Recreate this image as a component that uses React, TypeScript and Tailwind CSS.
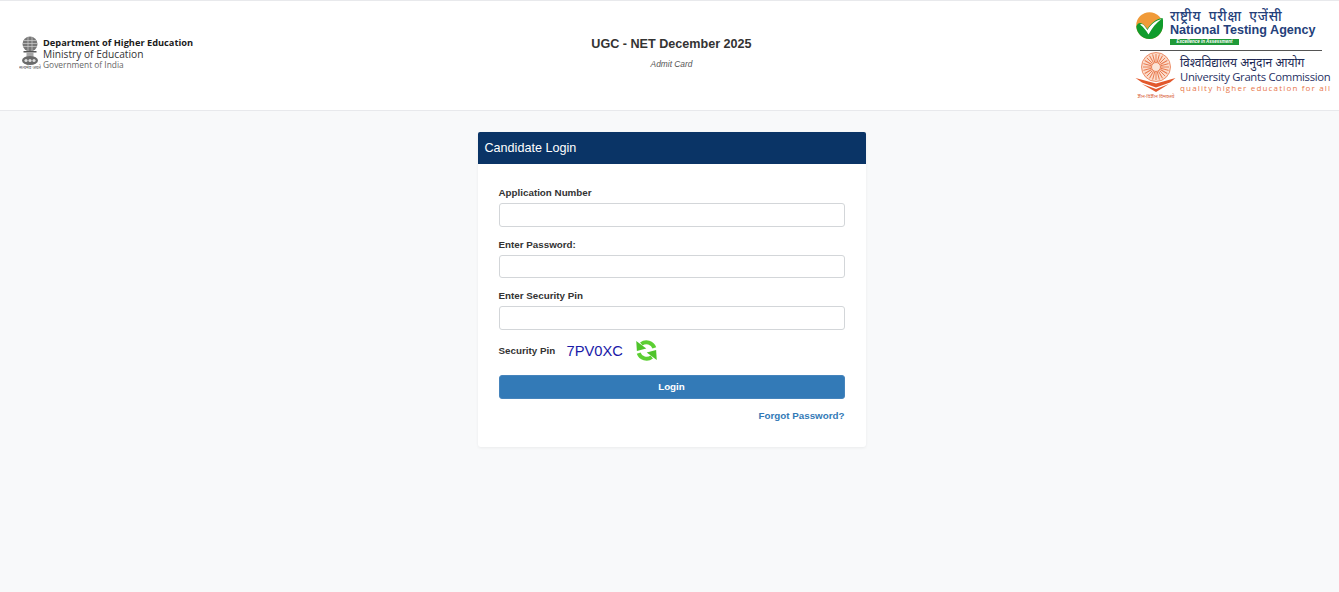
import React from 'react';

const SANS = 'font-["Liberation_Sans",Arial,sans-serif]';

// Ashoka emblem, small grey mark
function Emblem() {
  return (
    <svg width="22" height="34" viewBox="0 0 22 34" className="block">
      <ellipse cx="11" cy="8" rx="7.500" ry="7.500" fill="#777777" />
      <path d="M5 4.500h12M4 7.500h14M4 10.500h14M9 1v14M13 1v14" stroke="#cfcfcf" strokeWidth="0.7" />
      <rect x="4.500" y="15" width="13" height="1.500" fill="#555555" />
      <path d="M7.500 16.500h7v4h-7z" fill="#a5a5a5" />
      <ellipse cx="11" cy="24.500" rx="8" ry="4.500" fill="#6a6a6a" />
      <circle cx="7" cy="24.500" r="1.600" fill="#dddddd" />
      <circle cx="11" cy="24.500" r="1.600" fill="#dddddd" />
      <circle cx="15" cy="24.500" r="1.600" fill="#dddddd" />
      <text x="11" y="33" textAnchor="middle" fontSize="4.500" fill="#555555" fontFamily="'Noto Sans', sans-serif">सत्यमेव जयते</text>
    </svg>
  );
}

function NtaMark() {
  return (
    <svg width="27" height="27" viewBox="0 0 27 27" className="block">
      <circle cx="13.500" cy="13.500" r="13.300" fill="#f09a38" />
      <path d="M0.300 14.500 C2 10 5 10 8 13 L11.500 17 C15 11 20 7 26.500 6 C27.500 9 27.200 12 27 14 C26.500 21 20.500 27 13.500 27 C6 27 0.800 21 0.300 14.500Z" fill="#109c2c" />
      <path d="M4 12.500 C6 11 7.500 12.500 8.500 14 L11.500 18 C15 12 20 8.500 25.500 7 C20 11 16 16 12.500 22.500 C10 18.500 7.500 15 4 12.500Z" fill="#ffffff" />
    </svg>
  );
}

function UgcMark() {
  const rays = Array.from({ length: 24 }, (_, i) => (i * 360) / 24);
  return (
    <svg width="41" height="46" viewBox="0 0 41 46" className="block shrink-0">
      <circle cx="21" cy="15" r="14.500" fill="#fbdccb" stroke="#e8764a" strokeWidth="0.8" />
      {rays.map((a) => (
        <line key={a} x1="21" y1="10" x2="21" y2="2" stroke="#e8764a" strokeWidth="0.9" transform={`rotate(${a} 21 15)`} />
      ))}
      <circle cx="21" cy="15" r="4.500" fill="#fbe3d6" stroke="#e8764a" strokeWidth="0.9" />
      <path d="M0.500 26 L21 31.500 L40.500 26 L35 30.500 L21 35.500 L7 30.500Z" fill="#e2582c" />
      <path d="M7 32 L21 37 L34 32 L21 40Z" fill="#e2582c" />
      <text x="21" y="45.500" textAnchor="middle" fontSize="5" fill="#d9603a" fontFamily="'Noto Sans', sans-serif">ज्ञान-विज्ञान विमुक्तये</text>
    </svg>
  );
}

// two thick arrows chasing each other round a ring
function RefreshIcon() {
  return (
    <svg width="23" height="23" viewBox="0 0 22 22" className="-ml-px block">
      <g fill="none" stroke="#5ccf33" strokeWidth="3.800">
        <path d="M18.500 8.500 A8 8 0 0 0 6 4.800" />
        <path d="M3.500 13.500 A8 8 0 0 0 16 17.200" />
      </g>
      <path d="M1.200 2 L1.800 11.500 L10.800 9.200Z" fill="#4fc42b" />
      <path d="M20.800 20 L20.200 10.500 L11.200 12.800Z" fill="#4fc42b" />
    </svg>
  );
}

function Field({ label }: { label: string }) {
  return (
    <div className="mb-[10px]">
      <label className="mb-[3px] block text-[9.800px] leading-[15px] font-bold text-[#333333]">{label}</label>
      <input
        type="text"
        className="block h-[23.670px] w-full rounded-[3px] border border-[#d3d6d9] bg-white px-2 text-xs outline-none"
      />
    </div>
  );
}

export default function App() {
  return (
    <div className={`${SANS} min-h-[592px] bg-[#f8f9fa]`}>
      {/* top header */}
      <header className="flex h-[111px] items-center justify-between border-t border-b border-[#e8e9ec] bg-white pr-[6px] pl-[19px]">
        <div className="flex w-[320px] items-center gap-[2px] pb-[5px]">
          <Emblem />
          <div className="mt-[-1px] font-['Open_Sans',sans-serif] text-[#222]">
            <div className="text-[9.260px] leading-[12px] font-bold text-[#1b1b1b]">Department of Higher Education</div>
            <div className="text-[10.200px] leading-[11px] text-[#333]">Ministry of Education</div>
            <div className="text-[8.400px] leading-[9px] text-[#666]">Government of India</div>
          </div>
        </div>

        <div className="pb-[6px] text-center">
          <h1 className="text-[12.600px] leading-[18px] font-bold text-[#333333]">UGC - NET December 2025</h1>
          <p className="mt-[5px] text-[8.400px] leading-[12px] text-[#555] italic">Admit Card</p>
        </div>

        <div className="flex w-[329px] flex-col items-end self-start">
          <div className="w-[198px]">
            <div className="flex items-start gap-[7px] pl-px">
              <div className="pt-[11px]">
                <NtaMark />
              </div>
              <div className="pt-[8px]">
                <div className="font-['Noto_Sans',sans-serif] text-[13.500px] leading-[15px] font-medium tracking-[0.8px] [word-spacing:3px] whitespace-nowrap text-[#24407a]">राष्ट्रीय परीक्षा एजेंसी</div>
                <div className="text-[12.600px] leading-[13px] font-bold whitespace-nowrap text-[#24407a]">National Testing Agency</div>
                <div className="mt-[2px] h-[6px] w-[69px] bg-[#1f9a38] text-center text-[4.500px] leading-[6px] font-bold text-white italic">Excellence in Assessment</div>
              </div>
            </div>
            <div className="mt-[5px] ml-[5px] h-px w-[182px] bg-[#555]"></div>
            <div className="flex items-start gap-[4px] pt-[1px]">
              <UgcMark />
              <div className="pt-[4px] font-['Open_Sans',sans-serif] whitespace-nowrap">
                <div className="font-['Noto_Sans',sans-serif] text-[12px] leading-[14px] text-[#222a55]">विश्वविद्यालय अनुदान आयोग</div>
                <div className="text-[11.300px] leading-[13px] tracking-[-0.3px] text-[#283164]">University Grants Commission</div>
                <div className="mt-[-1px] text-[8px] leading-[11px] tracking-[1.17px] text-[#e8764a]">quality higher education for all</div>
              </div>
            </div>
          </div>
        </div>
      </header>

      {/* login card */}
      <main className="flex justify-center pt-[21px] pl-[4px]">
        <div className="w-[388px] rounded-[3px] bg-white shadow-[0_1px_3px_rgba(0,0,0,0.06)]">
          <div className="flex h-[32px] items-center rounded-t-[2px] bg-[#0a3466] px-[7px] text-[12.600px] text-white">Candidate Login</div>
          <form className="px-[21px] pt-[21px] pb-[24px]">
            <Field label="Application Number" />
            <Field label="Enter Password:" />
            <Field label="Enter Security Pin" />
            <div className="flex h-[22px] items-center">
              <span className="w-[68px] text-[9.800px] font-bold text-[#333333]">Security Pin</span>
              <span className="w-[69px] text-[14.700px] text-[#1a1aa8]">7PV0XC</span>
              <RefreshIcon />
            </div>
            <button type="button" className="mt-[13px] block h-[24px] w-full rounded-[3px] border border-[#4684bc] bg-[#337ab7] text-[9.800px] font-bold text-white">
              Login
            </button>
            <div className="mt-[9px] text-right text-[9.800px] leading-[15px]">
              <a className="font-bold text-[#337ab7]">Forgot Password?</a>
            </div>
          </form>
        </div>
      </main>
    </div>
  );
}
